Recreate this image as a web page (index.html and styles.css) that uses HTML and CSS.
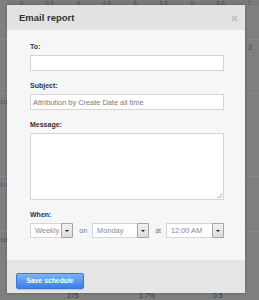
FILE: index.html
```html
<!DOCTYPE html>
<html>

<head>
    <link rel="stylesheet" href="styles.css">
</head>

<body>
    <div class="page">
        <div class="axis">
            <span>3</span><span>3.5</span><span>4</span><span>4.5</span><span>5</span>
            <span>5.5</span><span>6</span><span>6.5</span><span>7</span>
        </div>
        <div class="rows">
            <div class="row row-first"><span class="edge-num">3</span></div>
            <div class="row row-cu"><span class="link">cu</span></div>
            <div class="row row-sc"><span class="link">s-C</span></div>
            <div class="row row-se"><span class="link">se</span></div>
        </div>
        <div class="totals">
            <span class="t1">275</span>
            <span class="t2">1.7%</span>
            <span class="t3">0.5</span>
        </div>
    </div>

    <div class="modal">
        <div class="modal-header">
            <span class="modal-title">Email report</span>
            <svg class="close" width="7" height="7" viewBox="0 0 7 7">
                <path d="M1 1 L6 6 M6 1 L1 6" stroke="#bdbdbd" stroke-width="1.6" />
            </svg>
        </div>
        <div class="modal-body">
            <div class="fieldLabel">To:</div>
            <input type="text" class="field">
            <div class="fieldLabel spaced">Subject:</div>
            <input type="text" class="field" value="Attribution by Create Date all time">
            <div class="fieldLabel spaced">Message:</div>
            <textarea class="field message"></textarea>
            <div class="fieldLabel spaced">When:</div>
            <div class="when">
                <div class="pick pick-week"><span class="pick-text">Weekly</span><span class="pick-btn"></span></div>
                <span class="joiner">on</span>
                <div class="pick pick-day"><span class="pick-text">Monday</span><span class="pick-btn"></span></div>
                <span class="joiner">at</span>
                <div class="pick pick-time"><span class="pick-text">12:00 AM</span><span class="pick-btn"></span></div>
            </div>
        </div>
        <div class="modal-footer">
            <button class="saveBtn">Save schedule</button>
        </div>
    </div>
</body>

</html>
```

FILE: styles.css
```css
body {
    margin: 0;
    width: 259px;
    height: 300px;
    overflow: hidden;
    background: #7f7f7f;
    font-family: "Liberation Sans", Arial, sans-serif;
    position: relative;
}

.page {
    height: 300px;
    display: flex;
    flex-direction: column;
}

.axis {
    display: grid;
    grid-template-columns: repeat(9, 28.5px);
    margin-left: 7px;
    height: 6px;
    font-size: 6px;
    line-height: 6px;
    color: #4a4a4a;
    background: #7a7a7a;
    margin-top: -1px;
    padding-top: 1px;
}

.axis span {
    text-align: center;
}

.rows {
    flex: 1;
    position: relative;
}

.row {
    height: 16px;
    font-size: 7px;
    line-height: 16px;
    border-top: 1px solid #878787;
}

.row-first {
    margin-top: 33px;
    text-align: right;
    padding-right: 7px;
}

.edge-num {
    color: #4a4a4a;
}

.row-cu {
    margin-top: 37px;
}

.row-sc {
    margin-top: 66px;
}

.row-se {
    margin-top: 38px;
}

.link {
    color: #3f5b80;
}

.totals {
    height: 9px;
    font-size: 7px;
    line-height: 9px;
    color: #3c3c3c;
    position: relative;
}

.totals span {
    position: absolute;
    top: 0;
}

.t1 { left: 67px; }
.t2 { left: 139px; }
.t3 { left: 213px; }

.modal {
    position: absolute;
    left: 7px;
    top: 5px;
    width: 238px;
    height: 288px;
    display: flex;
    flex-direction: column;
    box-shadow: 0 0 3px rgba(0, 0, 0, 0.25);
}

.modal-header {
    height: 25px;
    background: #e2e2e2;
    display: flex;
    align-items: center;
    justify-content: space-between;
    padding: 0 7px 0 12px;
}

.modal-title {
    font-size: 9.5px;
    font-weight: bold;
    color: #333;
}

.close {
    margin-top: 2px;
}

.modal-body {
    height: 230px;
    background: #f6f6f6;
    padding: 12px 21px 0 23px;
    box-sizing: border-box;
}

.fieldLabel {
    font-size: 7px;
    font-weight: bold;
    line-height: 10px;
    color: #333;
    margin-bottom: 3px;
}

.spaced {
    margin-top: 10px;
}

.field {
    display: block;
    width: 194px;
    height: 16px;
    box-sizing: border-box;
    margin: 0;
    border: 1px solid #d5d5d5;
    background: #fff;
    padding: 0 2px;
    font-family: "Liberation Sans", Arial, sans-serif;
    font-size: 7.4px;
    color: #7a7a7a;
    outline: none;
}

.message {
    height: 67px;
    resize: none;
    background:
        linear-gradient(135deg, transparent 50%, #c8c8c8 50%, #c8c8c8 62%, transparent 62%, transparent 75%, #c8c8c8 75%, #c8c8c8 87%, transparent 87%) right 1px bottom 1px / 5px 5px no-repeat,
        #fff;
}

.when {
    display: flex;
    align-items: center;
    height: 15px;
}

.pick {
    display: flex;
    height: 15px;
    box-sizing: border-box;
    border: 1px solid #d5d5d5;
    background: #fff;
}

.pick-week { width: 44px; }
.pick-day { width: 58px; }
.pick-time { width: 59px; }

.pick-text {
    flex: 1;
    font-size: 7.4px;
    line-height: 13px;
    color: #8a8a8a;
    padding-left: 4px;
}

.pick-btn {
    width: 10px;
    margin: -1px -1px -1px 0;
    border: 1px solid #a5a5a5;
    border-radius: 1px;
    background: linear-gradient(#f2f2f2, #dcdcdc);
    position: relative;
}

.pick-btn::after {
    content: "";
    position: absolute;
    left: 3px;
    top: 6px;
    border-left: 2px solid transparent;
    border-right: 2px solid transparent;
    border-top: 2px solid #222;
}

.joiner {
    font-size: 7px;
    color: #777;
    margin: 0 5px 0 6px;
}

.modal-footer {
    flex: 1;
    background: #e5e5e5;
    padding: 9px 0 0 9px;
}

.saveBtn {
    width: 68px;
    height: 16px;
    padding: 0;
    border: 1px solid #3b78cf;
    border-radius: 2px;
    background: linear-gradient(#7db3f4, #3a7fe6);
    color: #fff;
    font-family: "Liberation Sans", Arial, sans-serif;
    font-size: 6.8px;
    font-weight: bold;
    box-shadow: 0 1px 1px rgba(0, 0, 0, 0.15);
}
```
